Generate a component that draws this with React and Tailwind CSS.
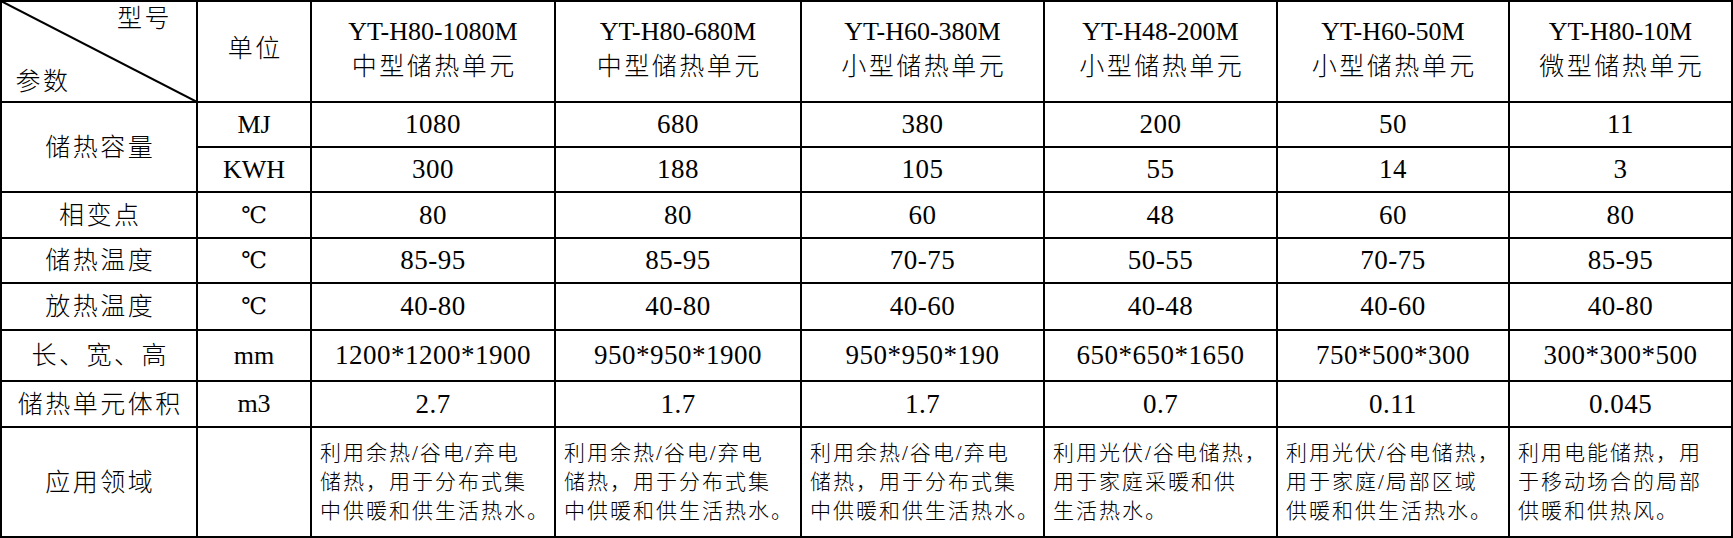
import React from "react";

const FONT = { fontFamily: '"Liberation Serif", "Noto Sans CJK SC", serif' };

const cols = [
  {
    model: "YT-H80-1080M", name: "中型储热单元", mj: "1080", kwh: "300", pc: "80", st: "85-95", rt: "40-80",
    dim: "1200*1200*1900", vol: "2.7",
    app: ["利用余热/谷电/弃电", "储热，用于分布式集", "中供暖和供生活热水。"],
  },
  {
    model: "YT-H80-680M", name: "中型储热单元", mj: "680", kwh: "188", pc: "80", st: "85-95", rt: "40-80",
    dim: "950*950*1900", vol: "1.7",
    app: ["利用余热/谷电/弃电", "储热，用于分布式集", "中供暖和供生活热水。"],
  },
  {
    model: "YT-H60-380M", name: "小型储热单元", mj: "380", kwh: "105", pc: "60", st: "70-75", rt: "40-60",
    dim: "950*950*190", vol: "1.7",
    app: ["利用余热/谷电/弃电", "储热，用于分布式集", "中供暖和供生活热水。"],
  },
  {
    model: "YT-H48-200M", name: "小型储热单元", mj: "200", kwh: "55", pc: "48", st: "50-55", rt: "40-48",
    dim: "650*650*1650", vol: "0.7",
    app: ["利用光伏/谷电储热，", "用于家庭采暖和供", "生活热水。"],
  },
  {
    model: "YT-H60-50M", name: "小型储热单元", mj: "50", kwh: "14", pc: "60", st: "70-75", rt: "40-60",
    dim: "750*500*300", vol: "0.11",
    app: ["利用光伏/谷电储热，", "用于家庭/局部区域", "供暖和供生活热水。"],
  },
  {
    model: "YT-H80-10M", name: "微型储热单元", mj: "11", kwh: "3", pc: "80", st: "85-95", rt: "40-80",
    dim: "300*300*500", vol: "0.045",
    app: ["利用电能储热，用", "于移动场合的局部", "供暖和供热风。"],
  },
];

function Cjk({ children }) {
  return <span className="text-[25px] font-light tracking-[2.5px] pl-[2.5px]">{children}</span>;
}

function Cell({ children, className = "" }) {
  return (
    <div className={"bg-white flex items-center justify-center whitespace-nowrap text-black " + className}>
      {children}
    </div>
  );
}

function Lat({ children }) {
  return <span className="text-[26px]">{children}</span>;
}

function Num({ children }) {
  return <span className="text-[27px] tracking-[0.5px]">{children}</span>;
}

export default function App() {
  const rows = [
    { key: "pc", label: "相变点", unit: "℃" },
    { key: "st", label: "储热温度", unit: "℃" },
    { key: "rt", label: "放热温度", unit: "℃" },
    { key: "dim", label: "长、宽、高", unit: "mm" },
    { key: "vol", label: "储热单元体积", unit: "m3" },
  ];
  return (
    <div className="w-[1733px] h-[538px] bg-white" style={FONT}>
      <div className="grid bg-black gap-[2px] p-[2px] grid-cols-[194px_112px_242px_244px_241px_231px_230px_221px] grid-rows-[99px_43px_43px_44px_43px_45px_49px_44px_108px] leading-none">
        {/* header corner */}
        <div className="bg-white relative flex flex-col justify-between pl-[11px] pr-[24px] pt-[3px] pb-[2px]">
          <svg className="absolute inset-0" width="194" height="99" viewBox="0 0 194 99">
            <line x1="-1" y1="-1" x2="195" y2="100" stroke="#000" strokeWidth="2" />
          </svg>
          <div className="self-end leading-[28px]"><Cjk>型号</Cjk></div>
          <div className="self-start leading-[28px]"><Cjk>参数</Cjk></div>
        </div>
        <Cell className="pb-[6px]"><Cjk>单位</Cjk></Cell>
        {cols.map((c) => (
          <Cell key={c.model} className="flex-col pb-[6px] leading-[35px]">
            <Lat>{c.model}</Lat>
            <Cjk>{c.name}</Cjk>
          </Cell>
        ))}

        {/* capacity */}
        <Cell className="row-span-2"><Cjk>储热容量</Cjk></Cell>
        <Cell><Lat>MJ</Lat></Cell>
        {cols.map((c) => (
          <Cell key={c.model + "mj"}><Num>{c.mj}</Num></Cell>
        ))}
        <Cell><Lat>KWH</Lat></Cell>
        {cols.map((c) => (
          <Cell key={c.model + "kwh"}><Num>{c.kwh}</Num></Cell>
        ))}

        {rows.map((r) => (
          <React.Fragment key={r.key}>
            <Cell><Cjk>{r.label}</Cjk></Cell>
            <Cell>
              {r.unit === "℃" ? (
                <span className="text-[23px]" style={{ fontFamily: '"DejaVu Serif", "Noto Sans CJK SC", serif' }}>℃</span>
              ) : (
                <Lat>{r.unit}</Lat>
              )}
            </Cell>
            {cols.map((c) => (
              <Cell key={c.model + r.key}><Num>{c[r.key]}</Num></Cell>
            ))}
          </React.Fragment>
        ))}

        <Cell><Cjk>应用领域</Cjk></Cell>
        <Cell />
        {cols.map((c) => (
          <div key={c.model + "app"} className="bg-white flex flex-col justify-center pl-[8px] pt-[1px] text-black whitespace-nowrap">
            {c.app.map((l, i) => (
              <div key={i} className="text-[21px] font-light tracking-[2px] leading-[28.7px]">{l}</div>
            ))}
          </div>
        ))}
      </div>
    </div>
  );
}
